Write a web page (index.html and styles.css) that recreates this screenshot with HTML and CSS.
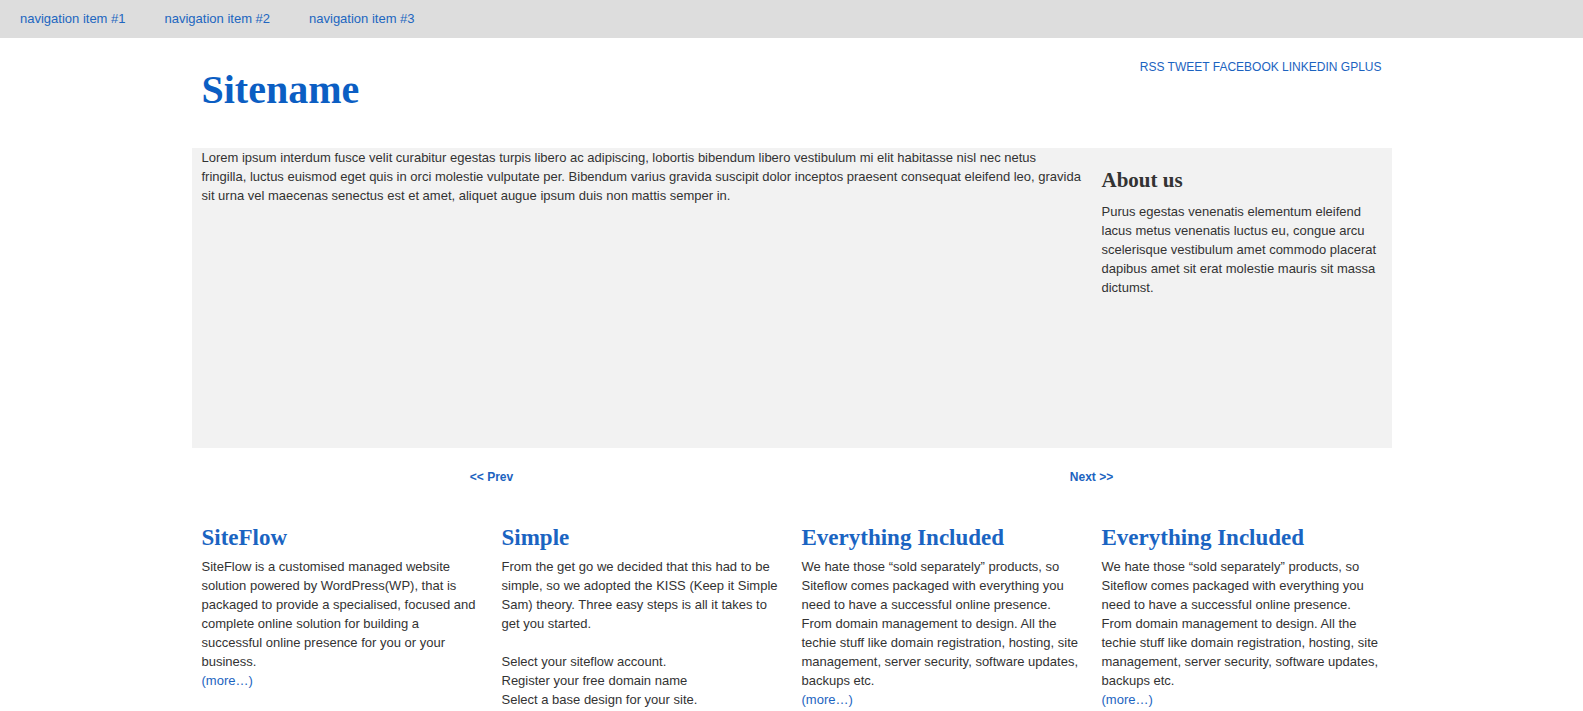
FILE: index.html
```html
<!DOCTYPE html>
<html lang="en">
<head>
<meta charset="utf-8">
<title>Sitename</title>
<link rel="stylesheet" href="styles.css">
</head>
<body>
<nav class="topnav">
  <a href="#">navigation item #1</a>
  <a href="#">navigation item #2</a>
  <a href="#">navigation item #3</a>
</nav>
<div class="wrap">
  <header class="header">
    <h1 class="sitename">Sitename</h1>
    <div class="social">
      <a href="#">RSS</a> <a href="#">TWEET</a> <a href="#">FACEBOOK</a> <a href="#">LINKEDIN</a> <a href="#">GPLUS</a>
    </div>
  </header>
  <section class="feature">
    <div class="feature-main">
      <p>Lorem ipsum interdum fusce velit curabitur egestas turpis libero ac adipiscing, lobortis bibendum libero vestibulum mi elit habitasse nisl nec netus fringilla, luctus euismod eget quis in orci molestie vulputate per. Bibendum varius gravida suscipit dolor inceptos praesent consequat eleifend leo, gravida sit urna vel maecenas senectus est et amet, aliquet augue ipsum duis non mattis semper in.</p>
    </div>
    <aside class="feature-side">
      <h2>About us</h2>
      <p>Purus egestas venenatis elementum eleifend lacus metus venenatis luctus eu, congue arcu scelerisque vestibulum amet commodo placerat dapibus amet sit erat molestie mauris sit massa dictumst.</p>
    </aside>
  </section>
  <div class="pager">
    <a href="#">&lt;&lt; Prev</a>
    <a href="#">Next &gt;&gt;</a>
  </div>
  <section class="cols">
    <div class="col">
      <h3>SiteFlow</h3>
      <p>SiteFlow is a customised managed website solution powered by WordPress(WP), that is packaged to provide a specialised, focused and complete online solution for building a successful online presence for you or your business.<br><a href="#">(more…)</a></p>
    </div>
    <div class="col">
      <h3>Simple</h3>
      <p>From the get go we decided that this had to be simple, so we adopted the KISS (Keep it Simple Sam) theory. Three easy steps is all it takes to get you started.<br><br>Select your siteflow account.<br>Register your free domain name<br>Select a base design for your site.</p>
    </div>
    <div class="col">
      <h3>Everything Included</h3>
      <p>We hate those “sold separately” products, so Siteflow comes packaged with everything you need to have a successful online presence. From domain management to design. All the techie stuff like domain registration, hosting, site management, server security, software updates, backups etc.<br><a href="#">(more…)</a></p>
    </div>
    <div class="col">
      <h3>Everything Included</h3>
      <p>We hate those “sold separately” products, so Siteflow comes packaged with everything you need to have a successful online presence. From domain management to design. All the techie stuff like domain registration, hosting, site management, server security, software updates, backups etc.<br><a href="#">(more…)</a></p>
    </div>
  </section>
</div>
</body>
</html>
```

FILE: styles.css
```css
* { box-sizing: border-box; }

html, body {
  margin: 0;
  padding: 0;
  background: #ffffff;
  font-family: "Liberation Sans", Arial, sans-serif;
  font-size: 13px;
  color: #333333;
}

a {
  color: #1c63c0;
  text-decoration: none;
}

.topnav {
  height: 38px;
  background: #dddddd;
  display: flex;
  align-items: center;
  gap: 39px;
  padding: 0 0 1px 20px;
  font-size: 13px;
}

.topnav a {
  color: #2166c0;
}

.wrap {
  width: 1200px;
  margin: 0 auto;
}

.header {
  display: flex;
  justify-content: space-between;
  align-items: flex-start;
  padding: 20px 10px 0;
}

.sitename {
  margin: 8px 0 34px;
  font-family: "Palatino Linotype", "Book Antiqua", Palatino, "Liberation Serif", serif;
  font-weight: bold;
  font-size: 40px;
  line-height: 48px;
  color: #0b5ec3;
}

.social {
  font-size: 12px;
  line-height: 16px;
  margin-top: 1px;
}

.social a {
  color: #1c63c0;
}

.feature {
  display: flex;
  height: 300px;
  background: #f2f2f2;
}

.feature-main {
  width: 900px;
  padding: 0 10px;
}

.feature-main p {
  margin: 0;
  line-height: 19px;
}

.feature-side {
  width: 300px;
  padding: 19px 10px 0;
}

.feature-side h2 {
  margin: 0 0 9px;
  font-family: "Palatino Linotype", "Book Antiqua", Palatino, "Liberation Serif", serif;
  font-weight: bold;
  font-size: 21px;
  line-height: 26px;
  color: #333333;
}

.feature-side p {
  margin: 0;
  line-height: 19px;
}

.pager {
  display: grid;
  grid-template-columns: 1fr 1fr;
  padding: 21px 0 0;
  font-size: 12px;
  line-height: 16px;
  font-weight: bold;
  text-align: center;
}

.pager a {
  justify-self: center;
  color: #1c63c0;
}

.cols {
  display: grid;
  grid-template-columns: repeat(4, 300px);
  padding-top: 39px;
}

.col {
  padding: 0 10px;
}

.col h3 {
  margin: 0 0 5px;
  font-family: "Palatino Linotype", "Book Antiqua", Palatino, "Liberation Serif", serif;
  font-weight: bold;
  font-size: 23px;
  line-height: 28px;
  color: #1a64c2;
}

.col p {
  margin: 0;
  line-height: 19px;
}
```
